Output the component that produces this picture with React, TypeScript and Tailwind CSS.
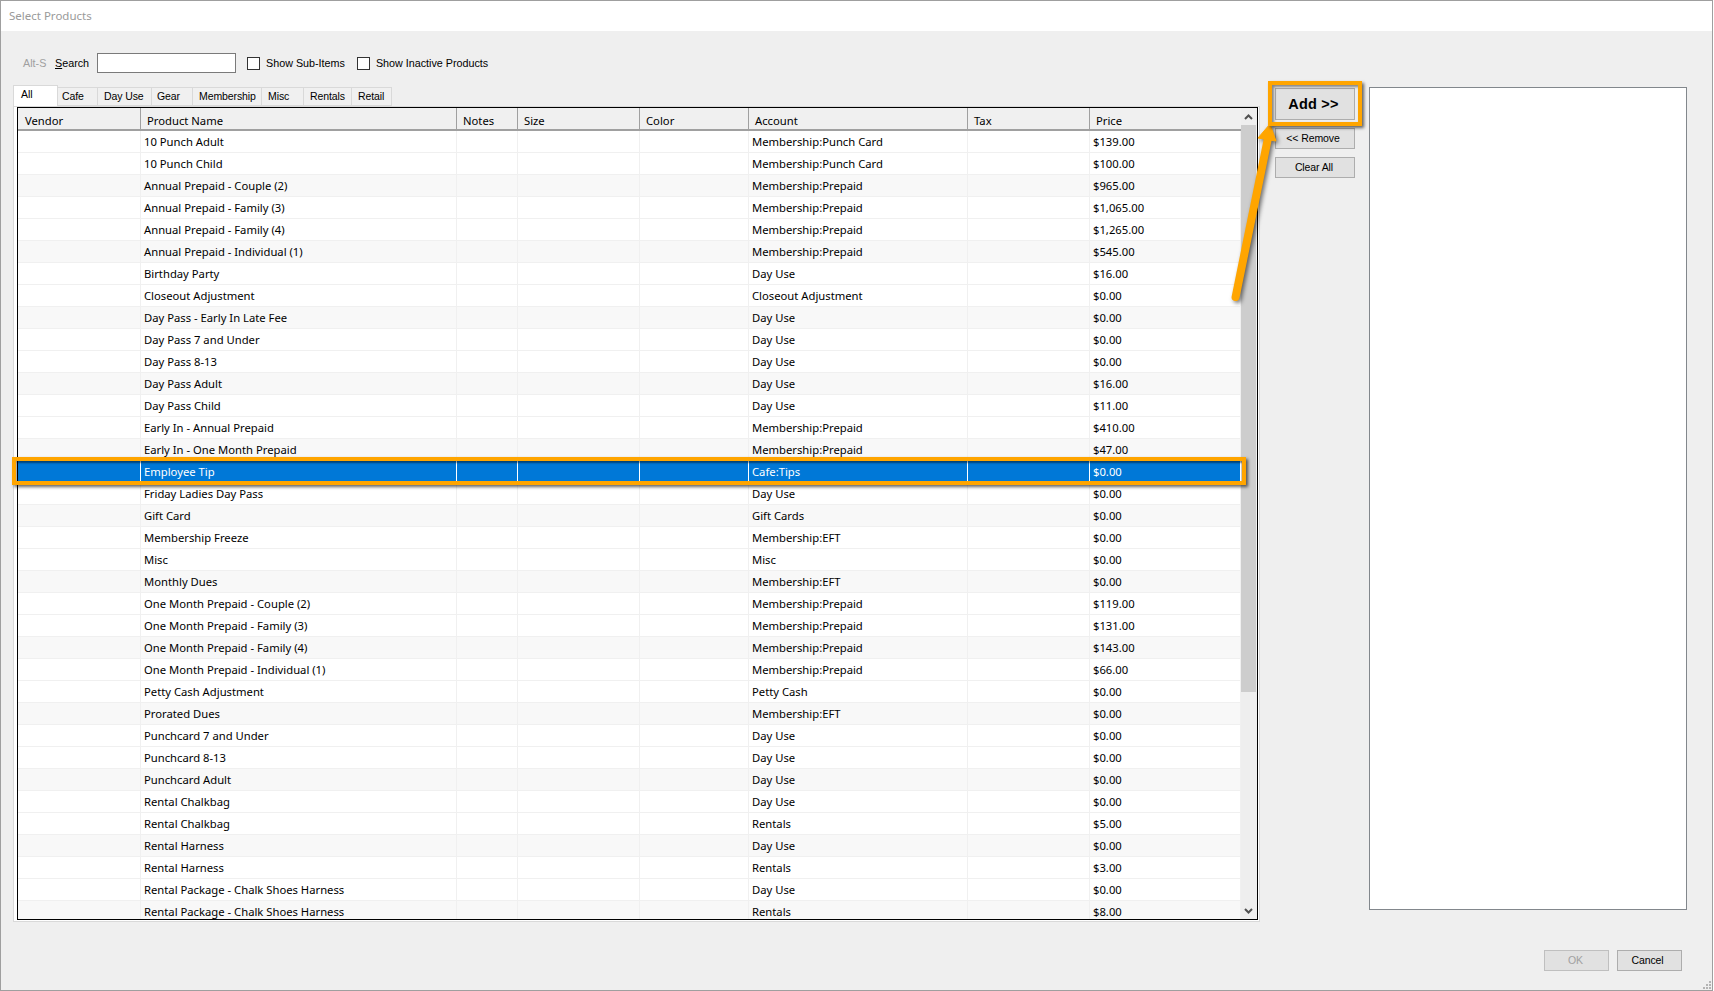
const products: [string, string, string][] = [
  ["10 Punch Adult", "Membership:Punch Card", "$139.00"],
  ["10 Punch Child", "Membership:Punch Card", "$100.00"],
  ["Annual Prepaid - Couple (2)", "Membership:Prepaid", "$965.00"],
  ["Annual Prepaid - Family (3)", "Membership:Prepaid", "$1,065.00"],
  ["Annual Prepaid - Family (4)", "Membership:Prepaid", "$1,265.00"],
  ["Annual Prepaid - Individual (1)", "Membership:Prepaid", "$545.00"],
  ["Birthday Party", "Day Use", "$16.00"],
  ["Closeout Adjustment", "Closeout Adjustment", "$0.00"],
  ["Day Pass - Early In Late Fee", "Day Use", "$0.00"],
  ["Day Pass 7 and Under", "Day Use", "$0.00"],
  ["Day Pass 8-13", "Day Use", "$0.00"],
  ["Day Pass Adult", "Day Use", "$16.00"],
  ["Day Pass Child", "Day Use", "$11.00"],
  ["Early In - Annual Prepaid", "Membership:Prepaid", "$410.00"],
  ["Early In - One Month Prepaid", "Membership:Prepaid", "$47.00"],
  ["Employee Tip", "Cafe:Tips", "$0.00"],
  ["Friday Ladies Day Pass", "Day Use", "$0.00"],
  ["Gift Card", "Gift Cards", "$0.00"],
  ["Membership Freeze", "Membership:EFT", "$0.00"],
  ["Misc", "Misc", "$0.00"],
  ["Monthly Dues", "Membership:EFT", "$0.00"],
  ["One Month Prepaid - Couple (2)", "Membership:Prepaid", "$119.00"],
  ["One Month Prepaid - Family (3)", "Membership:Prepaid", "$131.00"],
  ["One Month Prepaid - Family (4)", "Membership:Prepaid", "$143.00"],
  ["One Month Prepaid - Individual (1)", "Membership:Prepaid", "$66.00"],
  ["Petty Cash Adjustment", "Petty Cash", "$0.00"],
  ["Prorated Dues", "Membership:EFT", "$0.00"],
  ["Punchcard 7 and Under", "Day Use", "$0.00"],
  ["Punchcard 8-13", "Day Use", "$0.00"],
  ["Punchcard Adult", "Day Use", "$0.00"],
  ["Rental Chalkbag", "Day Use", "$0.00"],
  ["Rental Chalkbag", "Rentals", "$5.00"],
  ["Rental Harness", "Day Use", "$0.00"],
  ["Rental Harness", "Rentals", "$3.00"],
  ["Rental Package - Chalk Shoes Harness", "Day Use", "$0.00"],
  ["Rental Package - Chalk Shoes Harness", "Rentals", "$8.00"],
];

const tabs = [
  { label: "Cafe", w: "w-[40px] pl-[4px]" },
  { label: "Day Use", w: "w-[54px] pl-[6px]" },
  { label: "Gear", w: "w-[41px] pl-[5px]" },
  { label: "Membership", w: "w-[69px] pl-[6px]" },
  { label: "Misc", w: "w-[42px] pl-[6px]" },
  { label: "Rentals", w: "w-[48px] pl-[6px]" },
  { label: "Retail", w: "w-[40px] pl-[6px]" },
];

const columns = [
  { label: "Vendor", w: "w-[123px]" },
  { label: "Product Name", w: "w-[316px]" },
  { label: "Notes", w: "w-[61px]" },
  { label: "Size", w: "w-[122px]" },
  { label: "Color", w: "w-[109px]" },
  { label: "Account", w: "w-[219px]" },
  { label: "Tax", w: "w-[122px]" },
  { label: "Price", w: "flex-1" },
];

const Row = ({ product, index }: { product: [string, string, string]; index: number }) => {
  const selected = product[0] === "Employee Tip";
  const shaded = (index + 1) % 3 === 0;
  const cell = `h-full shrink-0 border-r pl-[3px] leading-[21px] ${selected ? "border-white" : "border-[#f0f0f0]"}`;
  return (
    <div
      className={`flex h-[22px] shrink-0 border-b ${
        selected
          ? "bg-[#0078d7] text-white border-[#0078d7]"
          : `border-[#f0f0f0] text-black ${shaded ? "bg-[#f8f8f8]" : "bg-white"}`
      }`}
    >
      <div className={`${cell} w-[123px]`} />
      <div className={`${cell} w-[316px]`}>{product[0]}</div>
      <div className={`${cell} w-[61px]`} />
      <div className={`${cell} w-[122px]`} />
      <div className={`${cell} w-[109px]`} />
      <div className={`${cell} w-[219px]`}>{product[1]}</div>
      <div className={`${cell} w-[122px]`} />
      <div className={`${cell} flex-1`}>{product[2]}</div>
    </div>
  );
};

const Btn = ({ label, className = "" }: { label: string; className?: string }) => (
  <button className={`flex items-center justify-center border border-[#adadad] bg-[#e1e1e1] ${className}`}>{label}</button>
);

const Checkbox = ({ label }: { label: string }) => (
  <label className="flex items-center gap-[6px]">
    <span className="h-[13px] w-[13px] border border-[#333] bg-white" />
    {label}
  </label>
);

export default function App() {
  return (
    <div className="relative h-[991px] w-[1714px] overflow-hidden bg-white font-['Liberation_Sans',sans-serif] text-[10.5px] tracking-[-0.1px] text-black">
      <div className="flex h-[991px] w-[1713px] flex-col border border-[#9f9f9f] bg-[#efefef]">
        {/* Title bar */}
        <div className="flex h-[30px] shrink-0 items-center bg-white pl-[8px] font-['Noto_Sans',sans-serif] text-[11.5px] tracking-normal text-[#9a9a9a]">
          Select Products
        </div>

        {/* Search row */}
        <div className="mt-[22px] flex h-[20px] shrink-0 items-center pl-[22px] text-[10.75px] tracking-normal">
          <span className="w-[32px] text-[#a0a0a0]">Alt-S</span>
          <span className="w-[42px]">
            <span className="underline">S</span>earch
          </span>
          <input className="h-[20px] w-[139px] border border-[#7a7a7a] bg-white" />
          <div className="ml-[11px]">
            <Checkbox label="Show Sub-Items" />
          </div>
          <div className="ml-[12px]">
            <Checkbox label="Show Inactive Products" />
          </div>
        </div>

        <div className="mt-[7px] flex min-h-0 flex-1">
          {/* Tabs and grid */}
          <div className="ml-[12px] w-[1247px] shrink-0">
            <div className="flex h-[26px] items-end">
              <div className="h-[21px] w-[45px] border border-b-0 border-[#d9d9d9] bg-white pl-[7px] pt-[1px]">All</div>
              {tabs.map((tab) => (
                <div
                  key={tab.label}
                  className={`flex h-[19px] items-center border border-l-0 border-[#d9d9d9] bg-[#f0f0f0] pt-[1px] ${tab.w}`}
                >
                  {tab.label}
                </div>
              ))}
            </div>
            <div className="h-[816px] border border-[#d9d9d9] bg-white pb-[3px] pl-[3px] pr-[1px]">
              <div className="flex h-[813px] border border-black">
                <div className="flex min-w-0 flex-1 flex-col overflow-hidden font-['Noto_Sans',sans-serif] text-[11.25px] tracking-normal">
                  <div className="flex h-[23px] shrink-0 border-b-2 border-[#a0a0a0] bg-[#f0f0f0]">
                    {columns.map((col) => (
                      <div
                        key={col.label}
                        className={`h-[21px] shrink-0 pl-[6px] leading-[25px] first:pl-[7px] ${col.w} ${
                          col.label === "Price" ? "" : "border-r border-[#a0a0a0]"
                        }`}
                      >
                        {col.label}
                      </div>
                    ))}
                  </div>
                  {products.map((product, i) => (
                    <Row key={i} product={product} index={i} />
                  ))}
                </div>
                {/* Scrollbar */}
                <div className="flex w-[16px] shrink-0 flex-col bg-[#eeeeee]">
                  <div className="flex h-[17px] shrink-0 items-center justify-center pr-[1px]">
                    <svg width="9" height="6" viewBox="0 0 9 6" fill="none" stroke="#505050" strokeWidth="2">
                      <path d="M1 5l3.5-3.5L8 5" />
                    </svg>
                  </div>
                  <div className="mr-[1px] h-[567px] shrink-0 bg-[#cdcdcd]" />
                  <div className="flex-1" />
                  <div className="flex h-[17px] shrink-0 items-center justify-center pr-[1px]">
                    <svg width="9" height="6" viewBox="0 0 9 6" fill="none" stroke="#505050" strokeWidth="2">
                      <path d="M1 1l3.5 3.5L8 1" />
                    </svg>
                  </div>
                </div>
              </div>
            </div>
          </div>

          {/* Add / remove */}
          <div className="ml-[15px] flex w-[80px] shrink-0 flex-col pt-[8px]">
            <Btn label="Add >>" className="h-[32px] pr-[3px] pt-[1px] text-[14.5px] font-bold tracking-[0.2px]" />
            <Btn label="<< Remove" className="mt-[8px] h-[21px] pr-[4px]" />
            <Btn label="Clear All" className="mt-[8px] h-[21px] pr-[2px]" />
          </div>

          {/* Selected items */}
          <div className="ml-[14px] w-[318px] shrink-0 pt-[7px]">
            <div className="h-[823px] border border-[#82878c] bg-white" />
          </div>
        </div>

        <div className="flex h-[41px] shrink-0 justify-end pr-[30px] pt-[1px]">
          <Btn label="OK" className="h-[21px] w-[65px] border-[#bfbfbf] bg-[#cccccc] pr-[2px] text-[#a0a0a0]" />
          <Btn label="Cancel" className="ml-[8px] h-[21px] w-[65px] pr-[4px]" />
        </div>
      </div>

      {/* Resize grip */}
      <svg className="absolute bottom-[2px] left-[1702px]" width="9" height="9" viewBox="0 0 9 9" fill="#b4b4b4">
        <rect x="7" y="1" width="2" height="2" />
        <rect x="4" y="4" width="2" height="2" />
        <rect x="7" y="4" width="2" height="2" />
        <rect x="1" y="7" width="2" height="2" />
        <rect x="4" y="7" width="2" height="2" />
        <rect x="7" y="7" width="2" height="2" />
      </svg>

      {/* Annotation: arrow */}
      <svg
        className="pointer-events-none absolute left-[1220px] top-[115px] [filter:drop-shadow(2px_2px_2px_rgba(0,0,0,0.55))]"
        width="70"
        height="195"
        viewBox="0 0 70 195"
      >
        <path d="M15.6 182L48 23" stroke="#ffa500" strokeWidth="8" strokeLinecap="round" fill="none" />
        <path d="M50 9L38 23L56 26Z" fill="#ffa500" stroke="#ffa500" strokeWidth="1" strokeLinejoin="round" />
      </svg>
      {/* Annotation: row highlight */}
      <div className="absolute left-[12px] top-[457px] h-[28px] w-[1234px] border-4 border-[#ffa500] shadow-[2px_2px_3px_rgba(0,0,0,0.6),inset_1px_2px_2px_rgba(0,0,0,0.45)]" />
      {/* Annotation: Add button highlight */}
      <div className="absolute left-[1268px] top-[81px] h-[45px] w-[94px] border-4 border-[#ffa500] shadow-[2px_2px_3px_rgba(0,0,0,0.6),inset_2px_2px_3px_rgba(0,0,0,0.45)]" />
    </div>
  );
}
